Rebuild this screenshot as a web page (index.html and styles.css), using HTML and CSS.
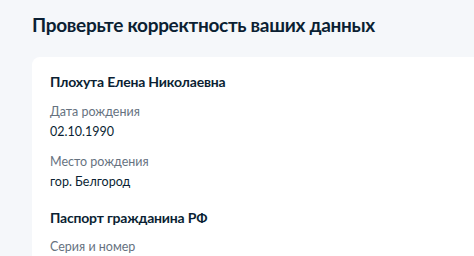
FILE: index.html
```html
<!DOCTYPE html>
<html lang="ru">
<head>
    <meta charset="UTF-8">
    <meta name="viewport" content="width=device-width, initial-scale=1.0">
    <title>Проверьте корректность ваших данных</title>
    <link rel="stylesheet" href="styles.css">
</head>
<body>
    <div class="page">
        <h1>Проверьте корректность ваших данных</h1>
        <div class="card">
            <div class="person">Плохута Елена Николаевна</div>

            <div class="field">
                <div class="field-label">Дата рождения</div>
                <div class="field-value">02.10.1990</div>
            </div>

            <div class="field">
                <div class="field-label">Место рождения</div>
                <div class="field-value">гор. Белгород</div>
            </div>

            <div class="section-title">Паспорт гражданина РФ</div>

            <div class="field">
                <div class="field-label">Серия и номер</div>
            </div>
        </div>
    </div>
</body>
</html>
```

FILE: styles.css
```css
body {
    font-family: Lato, "Open Sans", sans-serif;
    background-color: #f5f7fa;
    margin: 0;
    color: #0b1f33;
    overflow: hidden;
}

.page {
    padding: 12px 0 0 32px;
}

h1 {
    font-size: 19px;
    font-weight: 700;
    line-height: 26px;
    letter-spacing: -0.3px;
    margin: 0 0 19px;
    color: #0b1f33;
}

.card {
    background-color: #ffffff;
    border-radius: 8px 0 0 0;
    padding: 15px 18px;
    min-height: 300px;
}

.person,
.section-title {
    font-size: 14px;
    font-weight: 700;
    line-height: 20px;
    letter-spacing: -0.2px;
    margin-bottom: 10px;
}

.section-title {
    margin-top: 16px;
    margin-bottom: 9px;
}

.field + .field {
    margin-top: 10px;
}

.field-label {
    font-size: 12.5px;
    line-height: 20px;
    color: #66727f;
}

.field-value {
    font-size: 12.5px;
    line-height: 20px;
    color: #0b1f33;
}
```
